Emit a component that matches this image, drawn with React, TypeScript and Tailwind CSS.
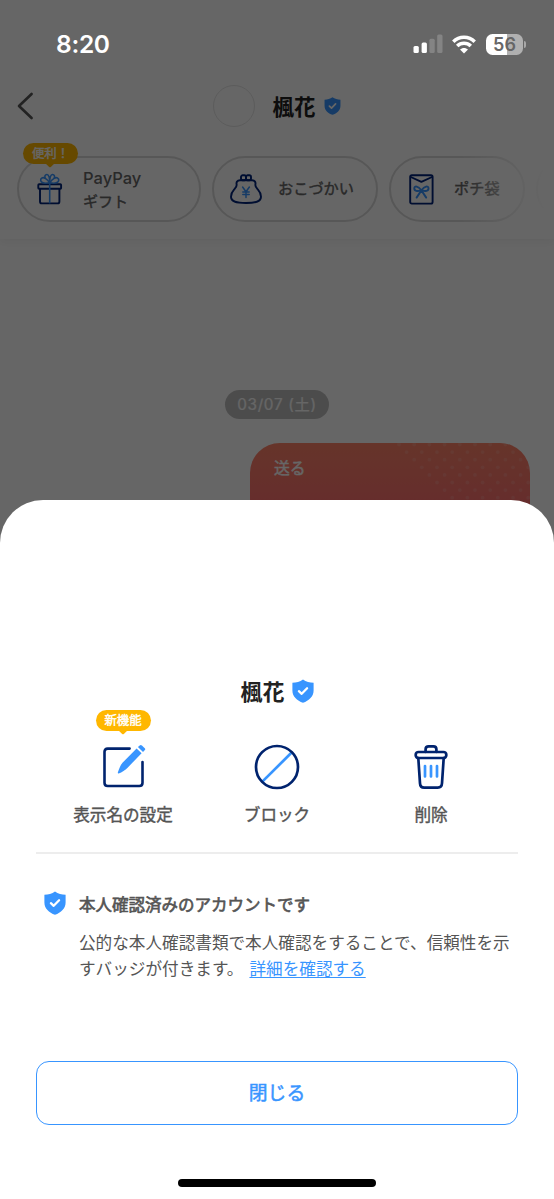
import React from 'react';

interface IconProps {
  className?: string;
}

const ShieldIcon: React.FC<IconProps> = ({ className }) => (
  <svg viewBox="0 0 22 24" className={className}>
    <path d="M11 0.4C14 2.5 17.8 3.7 21.6 3.7V11.5C21.6 17.6 17 21.6 11 23.8C5 21.6 0.4 17.6 0.4 11.5V3.7C4.2 3.7 8 2.5 11 0.4Z" fill="#3895ff" />
    <path d="M6.9 12.2L9.7 14.8L15.1 9.3" fill="none" stroke="#fff" strokeWidth="2.3" strokeLinecap="round" strokeLinejoin="round" />
  </svg>
);

const GiftIcon: React.FC = () => (
  <svg viewBox="0 0 26 32" className="h-8 w-[26px]" fill="none" strokeWidth="1.9" strokeLinejoin="round">
    <g stroke="#00237a">
      <rect x="1.3" y="11.3" width="22.8" height="4.4" rx="0.8" />
      <path d="M3 15.7V28.5Q3 30.4 4.8 30.4H20.6Q22.4 30.4 22.4 28.5V15.7" />
    </g>
    <g stroke="#3895ff" strokeWidth="1.6">
      <path d="M12.7 10V30.4" />
      <path d="M12.7 9.8C9 10.5 4.6 10.4 3.7 7.6C3.1 5 6 3.8 8.3 5.4C10.2 6.6 11.7 8.3 12.7 9.8ZM12.7 9.8C16.4 10.5 20.8 10.4 21.7 7.6C22.3 5 19.4 3.8 17.1 5.4C15.2 6.6 13.7 8.3 12.7 9.8Z" />
      <path d="M8.3 5.4C7.2 3.2 8.2 1.4 10 1.5C12 1.7 12.7 4.5 12.7 9.8C12.7 4.5 13.4 1.7 15.4 1.5C17.2 1.4 18.2 3.2 17.1 5.4" />
    </g>
  </svg>
);

const PurseIcon: React.FC = () => (
  <svg viewBox="0 0 32 30" className="h-[30px] w-8" fill="none" strokeLinecap="round" strokeLinejoin="round">
    <g stroke="#00237a" strokeWidth="1.9">
      <path d="M10 6.3H22C25 6.3 25.8 8.4 25.4 10.4C25 12.6 26.3 13.8 27.8 15.4C29.6 17.4 31 19.6 31 22.8C31 27.4 26.5 29 16 29C5.5 29 1 27.4 1 22.8C1 19.6 2.4 17.4 4.2 15.4C5.7 13.8 7 12.6 6.6 10.4C6.2 8.4 7 6.3 10 6.3Z" />
      <rect x="11" y="1.3" width="5" height="5" rx="1.7" />
      <rect x="16" y="1.3" width="5" height="5" rx="1.7" />
    </g>
    <path d="M12.6 13L16 17.8L19.4 13M16 17.8V23.4M12.8 18H19.2M12.8 20.6H19.2" stroke="#3895ff" strokeWidth="1.5" />
  </svg>
);

const EnvelopeIcon: React.FC = () => (
  <svg viewBox="0 0 25 31" className="h-[31px] w-[25px]" fill="none" strokeLinecap="round" strokeLinejoin="round">
    <g stroke="#00237a" strokeWidth="1.9">
      <rect x="1.2" y="1.2" width="22.4" height="28.4" rx="1.6" />
      <path d="M1.8 3L12.4 7.8L23 3" />
    </g>
    <g stroke="#3895ff" strokeWidth="1.9">
      <path d="M12.4 16.4C9 12 5.6 11.4 5.3 14.2C5 17.2 8.5 17.6 12.4 16.4ZM12.4 16.4C15.8 12 19.2 11.4 19.5 14.2C19.8 17.2 16.3 17.6 12.4 16.4Z" />
      <path d="M12.4 16.4L7.6 23.6M12.4 16.4L17.2 23.6" />
    </g>
  </svg>
);

const EditIcon: React.FC = () => (
  <svg viewBox="-1 0 46 46" className="size-[46px]" fill="none">
    <path d="M28.6 4.6H6.7Q3.5 4.6 3.5 7.8V38.8Q3.5 42 6.7 42H38.3Q41.5 42 41.5 38.8V18" stroke="#00236e" strokeWidth="2.6" strokeLinecap="round" strokeLinejoin="round" />
    <path d="M35.6 4.4L40.6 9.2L26.6 23.7C24.3 26 21 28.2 17.7 29.4C17 29.6 16.6 29.1 16.9 28.3C18.1 24.9 19.3 21.2 21.5 18.8L35.6 4.4Z" fill="#3895ff" />
    <path d="M36.9 3.1L38.7 1.4Q39.8 0.5 40.9 1.5L44 4.5Q44.7 5.3 43.9 6.1L42 8Z" fill="#3895ff" />
  </svg>
);

const BlockIcon: React.FC = () => (
  <svg viewBox="0 0 46 46" className="size-[46px]" fill="none" strokeWidth="2.7">
    <path d="M8.6 37.4L37.4 8.8" stroke="#3895ff" />
    <circle cx="23" cy="23" r="21" stroke="#00236e" />
  </svg>
);

const TrashIcon: React.FC = () => (
  <svg viewBox="0 0 46 46" className="size-[46px]" fill="none" strokeWidth="2.7" strokeLinecap="round" strokeLinejoin="round">
    <g stroke="#00236e">
      <rect x="7.7" y="8" width="30.6" height="6" rx="2.8" />
      <path d="M17.6 7.8V5.3Q17.6 2.3 20.6 2.3H25.4Q28.4 2.3 28.4 5.3V7.8" />
      <path d="M10.3 14L12 39.3Q12.2 43.6 16.2 43.6H29.8Q33.8 43.6 34 39.3L35.7 14" />
    </g>
    <path d="M17 22V32.5M23 22V32.5M29 22V32.5" stroke="#3895ff" />
  </svg>
);

const DotPattern: React.FC = () => (
  <svg className="absolute inset-0 h-full w-full" fill="#fff" fillOpacity="0.13">
    {Array.from({ length: 9 }, (_, row) =>
      Array.from({ length: 9 }, (_, col) => (
        <circle key={`${row}-${col}`} cx={149 + row * 7.6 + col * 15.2} cy={1.5 + row * 7.6} r="1.9" />
      ))
    )}
  </svg>
);

const StatusBar: React.FC = () => (
  <div className="absolute inset-x-0 top-0 flex h-[88px] items-center justify-between pr-[28px] pl-[56px] text-white">
    <span className="font-[Inter] text-[24.5px] font-semibold tracking-[-0.3px]">8:20</span>
    <div className="flex items-center">
      <svg viewBox="0 0 30 20" className="h-5 w-[30px]" fill="#fff">
        <rect x="0.5" y="12" width="5.3" height="7" rx="1.5" />
        <rect x="8.6" y="8.5" width="5.3" height="10.5" rx="1.5" />
        <rect x="16.4" y="4.8" width="5.3" height="14.2" rx="1.5" fillOpacity="0.2" />
        <rect x="24.2" y="0.6" width="5.3" height="18.4" rx="1.5" fillOpacity="0.2" />
      </svg>
      <svg viewBox="0 0 24 19" className="ml-[9px] h-[19px] w-6" fill="none" stroke="#fff" strokeWidth="3.5">
        <path d="M1.3 6.7C7.2 0.9 16.8 0.9 22.7 6.7" />
        <path d="M5.2 11.1C9 7.4 15 7.4 18.8 11.1" />
        <path d="M8 14.6C10.3 12.5 13.7 12.5 16 14.6L12 18.6Z" fill="#fff" stroke="none" />
      </svg>
      <div className="ml-[10px] flex h-[21px] w-[37px] items-center justify-center rounded-[6.5px] bg-[linear-gradient(90deg,#fff_56%,#b0b0b0_56%)] font-[Inter] text-[18px] font-semibold text-[#666]">56</div>
      <div className="ml-[1px] h-[7px] w-[2px] rounded-r-full bg-[#a8a8a8]" />
    </div>
  </div>
);

interface TooltipBadgeProps {
  label: string;
  className: string;
}

const TooltipBadge: React.FC<TooltipBadgeProps> = ({ label, className }) => (
  <div className={`absolute flex h-[21px] w-[55px] items-center justify-center rounded-full bg-[#ffb700] text-[12.4px] leading-[20px] whitespace-nowrap text-white [-webkit-text-stroke:0.4px] ${className}`}>
    <span className="-mt-px">{label}</span>
    <svg viewBox="0 0 10 5" className="absolute top-[20px] left-[22px] h-[5px] w-[10px]">
      <path d="M0 0H10L5.8 4Q5 4.6 4.2 4Z" fill="#ffb700" />
    </svg>
  </div>
);

const chip = 'relative flex h-[66px] shrink-0 items-center rounded-full border-2 border-[#dadada] bg-white text-[#666]';
const chipLabel = 'pb-[3px] text-[15.2px] [-webkit-text-stroke:0.4px]';

const Header: React.FC = () => (
  <header className="h-[239px] bg-white pt-[80px] shadow-[0_2px_10px_rgba(0,0,0,0.06)]">
    <div className="relative flex h-[52px] items-center justify-center">
      <svg viewBox="0 0 18 28" className="absolute left-[16px] h-7 w-[18px]" fill="none">
        <path d="M15.6 2L3 14L15.6 26" stroke="#555" strokeWidth="2.6" strokeLinecap="round" strokeLinejoin="round" />
      </svg>
      <div className="size-[42px] rounded-full border border-[#e6e6e6]" />
      <h1 className="ml-[17px] text-[21.5px] leading-none font-bold text-[#222]">楓花</h1>
      <ShieldIcon className="ml-[8px] h-[18px] w-[17px]" />
    </div>
    <div className="relative mt-[24px]">
      <nav className="flex gap-[11px] pl-[17px]">
        <div className={`${chip} w-[184px] pl-[18px]`}>
          <TooltipBadge label="便利！" className="-top-[15px] left-[4px]" />
          <GiftIcon />
          <div className="ml-[20px] flex flex-col leading-[23px]">
            <span className="font-[Inter] text-[16.5px] font-medium">PayPay</span>
            <span className="-mt-px text-[15px] [-webkit-text-stroke:0.4px]">ギフト</span>
          </div>
        </div>
        <div className={`${chip} w-[166px] pl-[16px]`}>
          <PurseIcon />
          <span className={`${chipLabel} ml-[16px]`}>おこづかい</span>
        </div>
        <div className={`${chip} w-[136px] pl-[18px]`}>
          <EnvelopeIcon />
          <span className={`${chipLabel} ml-[20px]`}>ポチ袋</span>
        </div>
        <div className={`${chip} w-[136px]`} />
      </nav>
      <div className="absolute inset-y-0 right-0 w-[92px] bg-linear-to-r from-white/0 to-white to-92%" />
    </div>
  </header>
);

interface ActionProps {
  icon: React.ReactNode;
  label: string;
  badge?: string;
}

const Action: React.FC<ActionProps> = ({ icon, label, badge }) => (
  <button className="relative flex w-[154px] flex-col items-center">
    {badge && <TooltipBadge label={badge} className="-top-[34px]" />}
    {icon}
    <span className="mt-[12px] text-[16.6px] leading-6 text-[#555] [-webkit-text-stroke:0.4px]">{label}</span>
  </button>
);

const ProfileSheet: React.FC = () => (
  <section className="h-[699px] rounded-t-[43px] bg-white px-9 pt-[176px]">
    <div className="flex h-[30px] items-center justify-center">
      <h2 className="pb-[2px] text-[22px] leading-none font-bold text-[#222]">楓花</h2>
      <ShieldIcon className="ml-[7px] h-6 w-[22px]" />
    </div>
    <div className="mt-[38px] flex justify-center">
      <Action icon={<EditIcon />} label="表示名の設定" badge="新機能" />
      <Action icon={<BlockIcon />} label="ブロック" />
      <Action icon={<TrashIcon />} label="削除" />
    </div>
    <hr className="mt-[26px] border-t-2 border-[#ededed]" />
    <div className="mt-[37px] flex pl-[8px]">
      <ShieldIcon className="h-6 w-[22px] shrink-0" />
      <div className="ml-[13px] w-[440px] text-[#555]">
        <h3 className="text-[16.5px] leading-[26px] font-normal [-webkit-text-stroke:0.65px]">本人確認済みのアカウントです</h3>
        <p className="mt-[12px] text-[16.62px] leading-[26px] whitespace-nowrap">
          公的な本人確認書類で本人確認をすることで、信頼性を示
          <br />
          すバッジが付きます。
          <a href="#" className="ml-[6px] text-[#3895ff] underline underline-offset-2">詳細を確認する</a>
        </p>
      </div>
    </div>
    <button className="mt-[80px] flex h-[64px] w-full items-center justify-center rounded-[13px] border-[1.5px] border-[#3895ff] pb-px text-[18.8px] text-[#3895ff] [-webkit-text-stroke:0.5px]">
      閉じる
    </button>
    <div className="mx-auto mt-[54px] h-[8px] w-[198px] rounded-full bg-black" />
  </section>
);

const App: React.FC = () => (
  <div className="relative h-[1199px] w-[554px] overflow-hidden bg-white font-['Noto_Sans_CJK_JP','Noto_Sans',sans-serif]">
    <Header />
    <main className="flex flex-col items-center pt-[151px]">
      <div className="flex h-[29px] w-[104px] items-center justify-center rounded-full bg-[#bfbfbf] pt-px text-[15.3px] tracking-[0.7px] text-white">
        <span className="font-['Inter','Noto_Sans_CJK_JP',sans-serif] [-webkit-text-stroke:0.2px]">03/07 (土)</span>
      </div>
      <div className="relative mt-[24px] mr-[24px] h-[160px] w-[280px] self-end overflow-hidden rounded-[30px] bg-linear-to-b from-[#ff8469] to-[#ff7070] to-40% pt-[13px] pl-[24px] text-[15.8px] text-white [-webkit-text-stroke:0.4px]">
        <DotPattern />
        送る
      </div>
    </main>
    <div className="absolute inset-0 flex flex-col justify-end bg-black/60">
      <ProfileSheet />
    </div>
    <StatusBar />
  </div>
);

export default App;
